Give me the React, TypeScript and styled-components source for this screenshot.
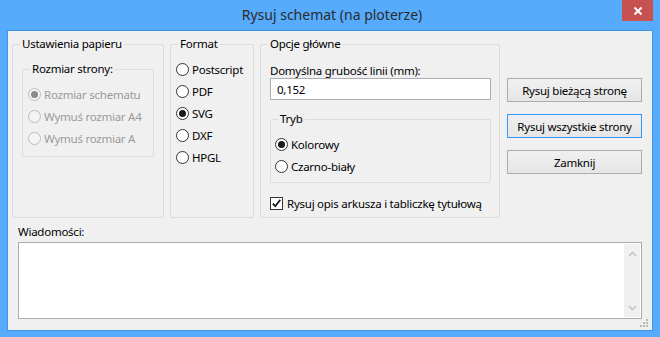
import React from 'react'
import styled, { createGlobalStyle } from 'styled-components'

const GlobalStyle = createGlobalStyle`
  html, body {
    margin: 0;
    padding: 0;
    background: #56abfd;
  }
  * {
    box-sizing: border-box;
  }
`

const UI_FONT = `"Noto Sans", "Open Sans", sans-serif`

export default function App() {
  return (
    <>
      <GlobalStyle />
      <Window>
        <TitleBar>
          <Title>Rysuj schemat (na ploterze)</Title>
          <CloseButton>
            <svg width="10" height="10" viewBox="0 0 10 10">
              <path d="M1.5 1.5 L8.5 8.5 M8.5 1.5 L1.5 8.5" stroke="#fff" strokeWidth="2" />
            </svg>
          </CloseButton>
        </TitleBar>
        <Client>
          <TopRow>
            <Group $width={152}>
              <Legend>Ustawienia papieru</Legend>
              <GroupBody $pad="9px 8px 0 9px">
                <Group $width={132} $height={88}>
                  <Legend>Rozmiar strony:</Legend>
                  <GroupBody $pad="6px 0 0 5px">
                    <RadioRow label="Rozmiar schematu" checked disabled />
                    <RadioRow label="Wymuś rozmiar A4" disabled />
                    <RadioRow label="Wymuś rozmiar A" disabled />
                  </GroupBody>
                </Group>
              </GroupBody>
            </Group>

            <Group $width={84}>
              <Legend>Format</Legend>
              <GroupBody $pad="6px 0 0 5px">
                <RadioRow label="Postscript" />
                <RadioRow label="PDF" />
                <RadioRow label="SVG" checked />
                <RadioRow label="DXF" />
                <RadioRow label="HPGL" />
              </GroupBody>
            </Group>

            <Group $width={240}>
              <Legend>Opcje główne</Legend>
              <GroupBody $pad="12px 8px 0 9px">
                <FieldLabel>Domyślna grubość linii (mm):</FieldLabel>
                <TextInput defaultValue="0,152" />
                <Group $width={221} $height={64} $mt={11}>
                  <Legend>Tryb</Legend>
                  <GroupBody $pad="6px 0 0 4px">
                    <RadioRow label="Kolorowy" checked />
                    <RadioRow label="Czarno-biały" />
                  </GroupBody>
                </Group>
                <CheckRow>
                  <CheckBox>
                    <svg width="11" height="11" viewBox="0 0 11 11">
                      <path d="M1.8 5.6 L4.3 8.2 L9.3 1.8" fill="none" stroke="#1a1a1a" strokeWidth="1.8" />
                    </svg>
                  </CheckBox>
                  <span>Rysuj opis arkusza i tabliczkę tytułową</span>
                </CheckRow>
              </GroupBody>
            </Group>

            <ButtonColumn>
              <PushButton>Rysuj bieżącą stronę</PushButton>
              <PushButton $default>Rysuj wszystkie strony</PushButton>
              <PushButton>Zamknij</PushButton>
            </ButtonColumn>
          </TopRow>

          <Messages>
            <FieldLabel>Wiadomości:</FieldLabel>
            <MessageBox>
              <MessageText />
              <ScrollBar>
                <svg width="9" height="6" viewBox="0 0 9 6">
                  <path d="M1 5 L4.5 1.5 L8 5" fill="none" stroke="#c4c4c4" strokeWidth="1.6" />
                </svg>
                <svg width="9" height="6" viewBox="0 0 9 6">
                  <path d="M1 1 L4.5 4.5 L8 1" fill="none" stroke="#c4c4c4" strokeWidth="1.6" />
                </svg>
              </ScrollBar>
            </MessageBox>
          </Messages>
          <Grip>
            <svg width="9" height="9" viewBox="0 0 9 9" fill="#b9b9b9">
              <rect x="6" y="0" width="2" height="2" />
              <rect x="3" y="3" width="2" height="2" />
              <rect x="6" y="3" width="2" height="2" />
              <rect x="0" y="6" width="2" height="2" />
              <rect x="3" y="6" width="2" height="2" />
              <rect x="6" y="6" width="2" height="2" />
            </svg>
          </Grip>
        </Client>
      </Window>
    </>
  )
}

function RadioRow({ label, checked, disabled }: { label: string; checked?: boolean; disabled?: boolean }) {
  return (
    <OptionRow $disabled={disabled}>
      <RadioCircle $disabled={disabled}>{checked && <RadioDot $disabled={disabled} />}</RadioCircle>
      <span>{label}</span>
    </OptionRow>
  )
}

const Window = styled.div`
  width: 660px;
  height: 337px;
  background: #56abfd;
  display: flex;
  flex-direction: column;
  font-family: ${UI_FONT};
`

const TitleBar = styled.div`
  position: relative;
  height: 30px;
  display: flex;
  align-items: center;
  justify-content: center;
`

const Title = styled.div`
  font-size: 14px;
  color: #2b2b2b;
  padding-left: 4px;
  padding-bottom: 1px;
`

const CloseButton = styled.div`
  position: absolute;
  top: 0;
  right: 7px;
  width: 31px;
  height: 21px;
  background: #c75050;
  display: flex;
  align-items: center;
  justify-content: center;
`

const Client = styled.div`
  position: relative;
  margin: 0 7px;
  height: 301px;
  border: 1px solid #3f95e6;
  background: #f0f0f0;
  padding: 5px 10px 0 4px;
  font-size: 11.5px;
  letter-spacing: -0.25px;
  color: #000;
`

const TopRow = styled.div`
  display: flex;
  gap: 6px;
  align-items: flex-start;
`

const Group = styled.fieldset<{ $width: number; $height?: number; $mt?: number }>`
  margin: ${(p) => p.$mt || 0}px 0 0 0;
  padding: 0;
  width: ${(p) => p.$width}px;
  height: ${(p) => (p.$height ? `${p.$height + 8}px` : '182px')};
  border: 1px solid #dcdcdc;
  border-radius: 2px;
  min-width: 0;
`

const Legend = styled.legend`
  margin-left: 7px;
  padding: 0 2px;
  line-height: 16px;
`

const GroupBody = styled.div<{ $pad: string }>`
  padding: ${(p) => p.$pad};
  display: flex;
  flex-direction: column;
`

const OptionRow = styled.div<{ $disabled?: boolean }>`
  height: 22px;
  display: flex;
  align-items: center;
  gap: 3px;
  color: ${(p) => (p.$disabled ? '#9a9a9a' : '#000')};
  white-space: nowrap;
`

const RadioCircle = styled.span<{ $disabled?: boolean }>`
  width: 13px;
  height: 13px;
  flex: none;
  border-radius: 50%;
  border: 1px solid ${(p) => (p.$disabled ? '#bcbcbc' : '#333')};
  background: ${(p) => (p.$disabled ? '#f4f4f4' : '#fff')};
  display: flex;
  align-items: center;
  justify-content: center;
`

const RadioDot = styled.span<{ $disabled?: boolean }>`
  width: 7px;
  height: 7px;
  border-radius: 50%;
  background: ${(p) => (p.$disabled ? '#8a8a8a' : '#1a1a1a')};
`

const FieldLabel = styled.div`
  line-height: 14px;
  white-space: nowrap;
`

const TextInput = styled.input`
  width: 221px;
  height: 22px;
  border: 1px solid #abadb3;
  background: #fff;
  padding: 0 6px;
  font-family: ${UI_FONT};
  font-size: 11.5px;
  letter-spacing: -0.25px;
  color: #000;
  outline: none;
`

const CheckRow = styled.div`
  margin-top: 11px;
  display: flex;
  align-items: center;
  gap: 4px;
  height: 18px;
  white-space: nowrap;
`

const CheckBox = styled.span`
  width: 13px;
  height: 13px;
  flex: none;
  border: 1px solid #333;
  background: #fff;
  display: flex;
  align-items: center;
  justify-content: center;
`

const ButtonColumn = styled.div`
  display: flex;
  flex-direction: column;
  gap: 12px;
  padding-top: 42px;
  margin-left: 1px;
`

const PushButton = styled.button<{ $default?: boolean }>`
  width: 135px;
  height: 24px;
  border: 1px solid ${(p) => (p.$default ? '#3399ff' : '#acacac')};
  background: linear-gradient(#f0f0f0, #e5e5e5);
  font-family: ${UI_FONT};
  font-size: 11.5px;
  letter-spacing: -0.25px;
  color: #000;
  padding: 0;
`

const Messages = styled.div`
  padding: 7px 0 0 6px;
  display: flex;
  flex-direction: column;
  gap: 3px;
`

const MessageBox = styled.div`
  height: 77px;
  border: 1px solid #ababab;
  background: #fff;
  display: flex;
  padding: 1px;
`

const MessageText = styled.div`
  flex: 1;
`

const ScrollBar = styled.div`
  width: 16px;
  background: #f0f0f0;
  display: flex;
  flex-direction: column;
  justify-content: space-between;
  align-items: center;
  padding: 7px 0 6px;
`

const Grip = styled.div`
  position: absolute;
  right: 3px;
  bottom: 2px;
  line-height: 0;
`
